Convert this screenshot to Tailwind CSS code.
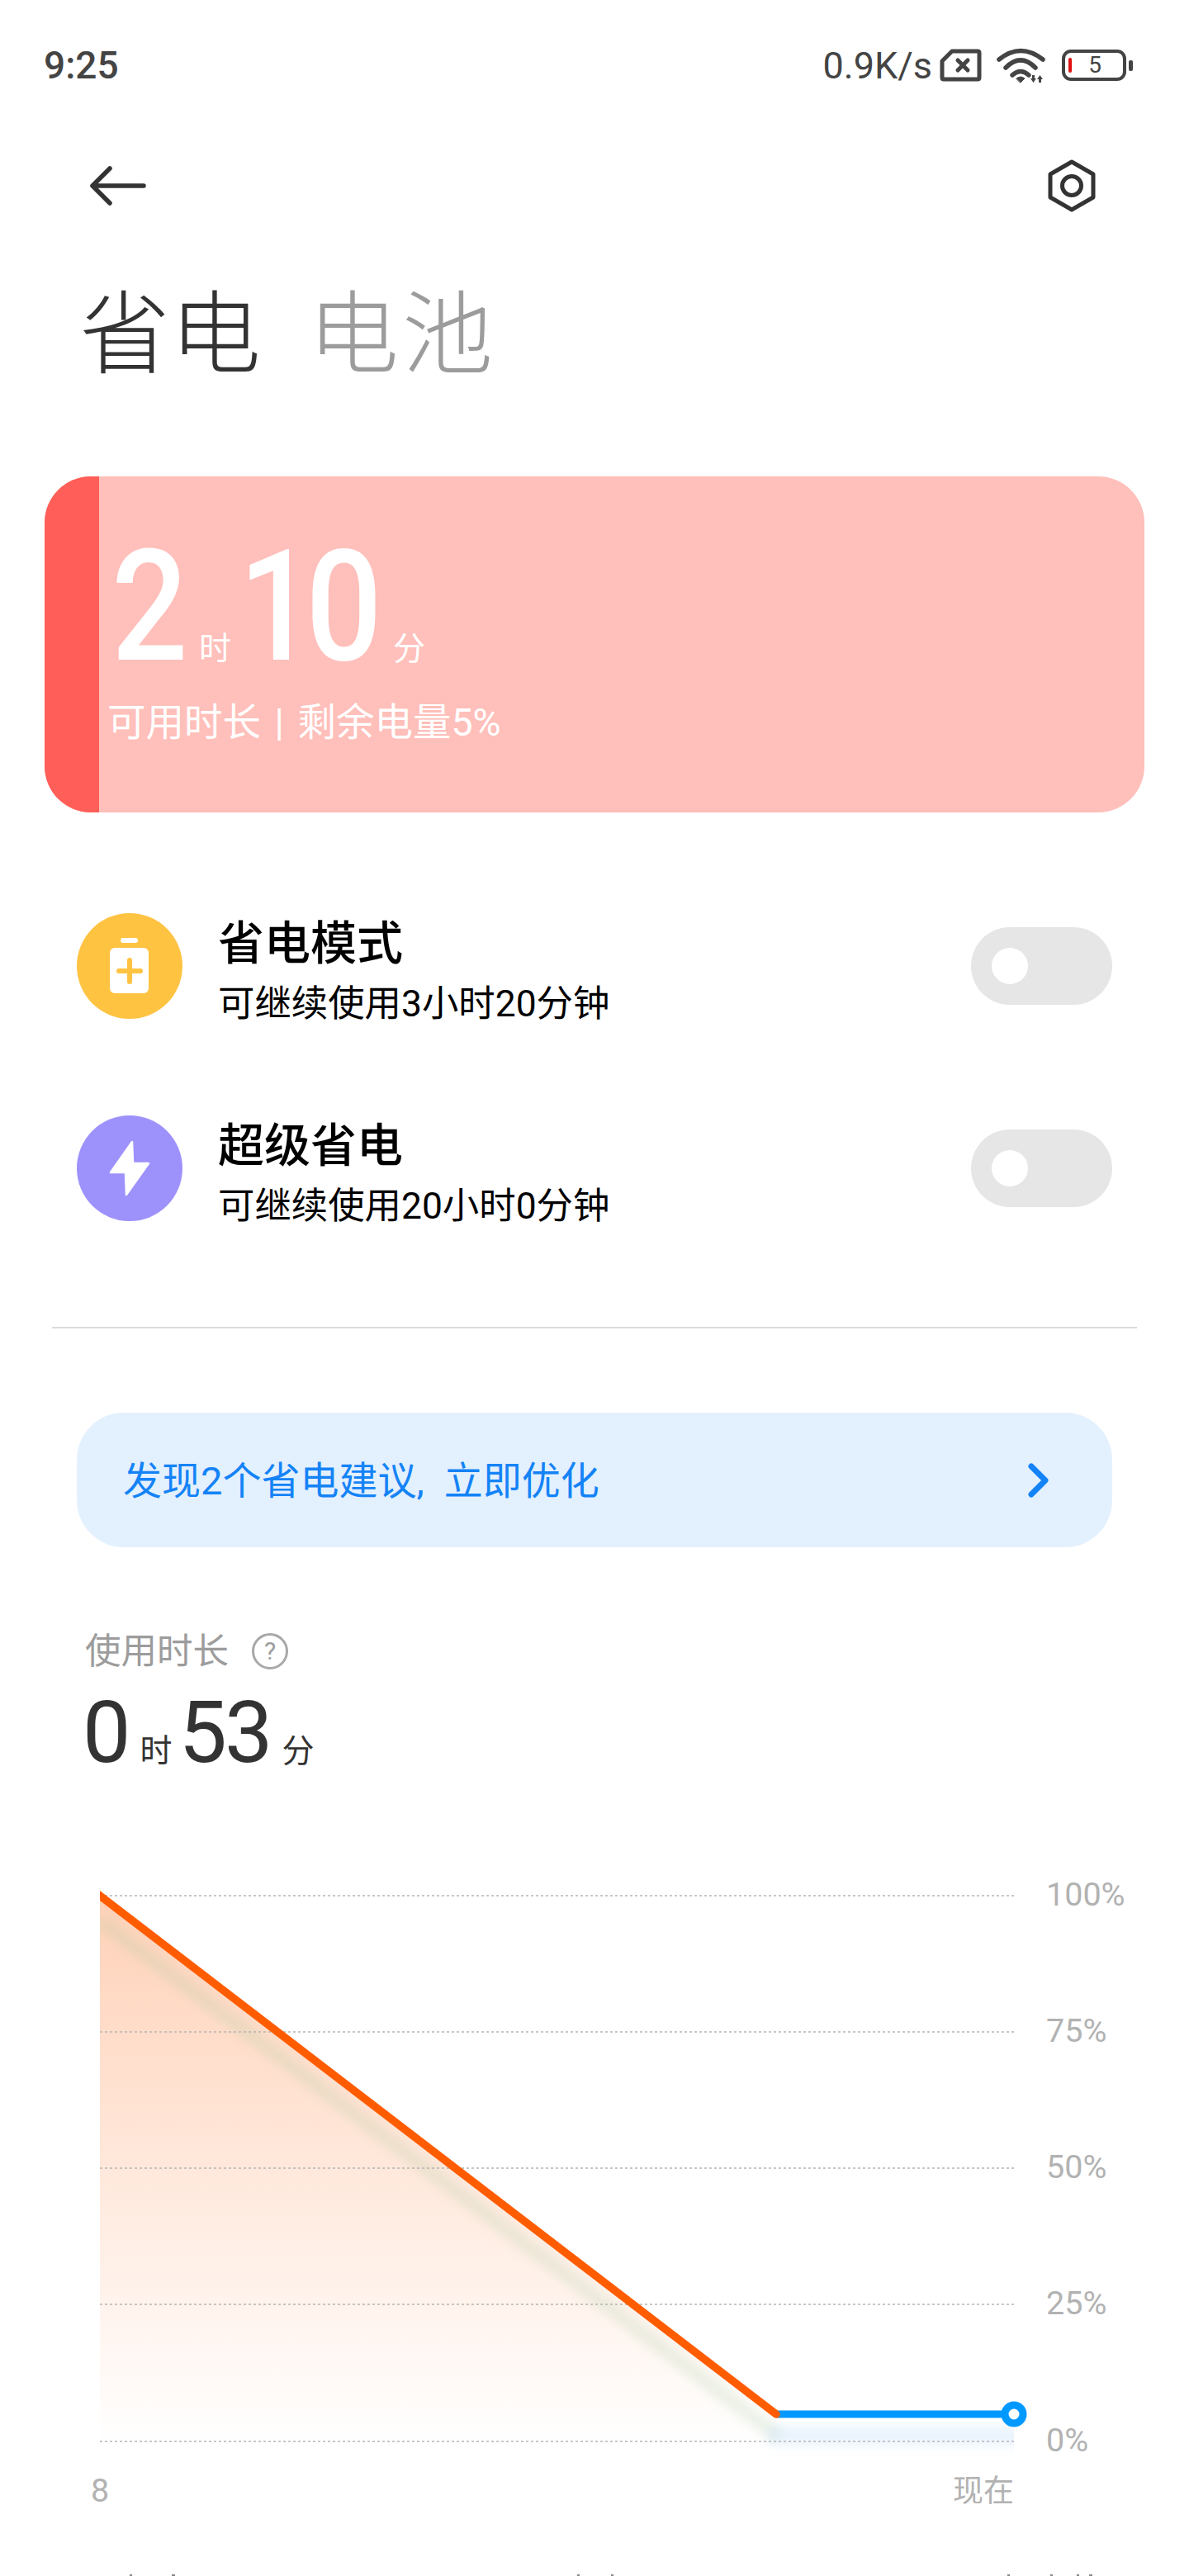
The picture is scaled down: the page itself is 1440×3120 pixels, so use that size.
<!DOCTYPE html>
<html lang="zh-CN">
<head>
<meta charset="utf-8">
<title>省电</title>
<script src="https://cdn.jsdelivr.net/npm/@tailwindcss/browser@4"></script>
</head>
<body class="m-0 bg-white">
<div class="w-[1440px] h-[3120px] overflow-hidden bg-white font-['Roboto','Noto_Sans_CJK_SC',sans-serif]">

  <!-- status bar -->
  <div class="h-[158px] flex items-center pl-[53px] pr-[68px] text-[#444]">
    <span class="text-[46px] leading-none font-medium">9:25</span>
    <div class="ml-auto flex items-center">
      <span class="text-[45px] leading-none">0.9K/s</span>
      <svg class="ml-[9px]" width="51" height="40" viewBox="0 0 51 40" fill="none" stroke="#444" stroke-width="5" stroke-linejoin="round"><path d="M15 3H46Q48 3 48 5V35Q48 37 46 37H5Q3 37 3 35V15Z"/><path d="M22 14L34 26M34 14L22 26" stroke-linecap="round"/></svg>
      <svg class="ml-[18px]" width="59" height="43" viewBox="0 0 59 43" fill="none" stroke="#444" stroke-width="5.500" stroke-linecap="round"><path d="M3 14Q29 -7 56 14"/><path d="M11 24Q29 6 47 24"/><path d="M19 33Q29 24 39 33"/><path d="M24 37Q29 33 34 37L29 42Z" fill="#444" stroke-width="1"/><path d="M43 33h3v4h2l-3.500 5l-3.500-5h2zM51 42h3v-4h2l-3.500-5l-3.500 5h2z" fill="#444" stroke="none"/></svg>
      <div class="ml-[20px] relative w-[78px] h-[38px] border-[4px] border-[#444] rounded-[11px] flex items-center justify-center text-[28px] leading-none pl-[2px]">
        <div class="absolute left-[4px] top-[6px] w-[4px] h-[18px] rounded-[2px] bg-[#e01010]"></div>
        <span>5</span>
      </div>
      <div class="ml-[3px] w-[5px] h-[13px] rounded-[2px] bg-[#444]"></div>
    </div>
  </div>

  <!-- nav -->
  <div class="h-[134px] flex items-center justify-between pl-[109px] pr-[112px]">
    <svg width="68" height="48" viewBox="0 0 68 48" fill="none" stroke="#333" stroke-width="5.500" stroke-linecap="round" stroke-linejoin="round"><path d="M24 3L3 24L24 45M3 24H65"/></svg>
    <svg width="60" height="64" viewBox="0 0 60 64" fill="none" stroke="#333" stroke-width="5" stroke-linejoin="round"><path d="M30 3L56 18V46L30 61L4 46V18Z"/><circle cx="30" cy="32" r="11.500"/></svg>
  </div>

  <!-- title -->
  <div class="h-[226px] flex items-center pt-[4px] pl-[96px] gap-[57px] text-[110px] leading-none font-light">
    <span class="text-[#333]">省电</span>
    <span class="text-[#9c9c9c] tracking-[4px]">电池</span>
  </div>

  <!-- remaining card -->
  <div class="mt-[59px] mx-[54px] h-[407px] rounded-[56px] overflow-hidden bg-[#ffbfba] flex">
    <div class="w-[66px] h-full bg-[#ff5f58]"></div>
    <div class="pt-[92px] pl-[12px] text-white">
      <div class="h-[133px] flex items-baseline text-[187px] leading-[133px] font-medium">
        <span class="ml-[3px] w-[106px] origin-left scale-x-[0.87]">2</span>
        <span class="w-[39px] text-[39px] leading-none font-normal">时</span>
        <span class="ml-[9px] w-[187px] origin-left scale-x-[0.87] tracking-[-13px]">10</span>
        <span class="text-[39px] leading-none font-normal">分</span>
      </div>
      <div class="mt-[43px] -ml-[2px] h-[60px] text-[46.500px] leading-[60px] whitespace-nowrap [word-spacing:5px]">可用时长 | 剩余电量5%</div>
    </div>
  </div>

  <!-- modes -->
  <div class="mt-[122px] px-[93px] flex flex-col gap-[117px]">
    <div class="h-[128px] flex items-center">
      <div class="w-[128px] h-[128px] rounded-full bg-[#ffc342] flex items-center justify-center">
        <svg width="128" height="128" viewBox="0 0 128 128"><rect x="53" y="30" width="21" height="6" rx="3" fill="#fff"/><rect x="40" y="42" width="47" height="55" rx="6" fill="#fff"/><path d="M64 57V83M51 70H77" stroke="#ffc342" stroke-width="6" stroke-linecap="round"/></svg>
      </div>
      <div class="ml-[43px] self-start mt-[7px] text-black whitespace-nowrap">
        <div class="text-[56px] leading-[60px] font-medium">省电模式</div>
        <div class="mt-[13px] text-[44.400px] leading-[60px]">可继续使用3小时20分钟</div>
      </div>
      <div class="ml-auto w-[171px] h-[94px] rounded-full bg-[#e6e6e6] flex items-center pl-[25px]"><div class="w-[44px] h-[44px] rounded-full bg-white"></div></div>
    </div>
    <div class="h-[128px] flex items-center">
      <div class="w-[128px] h-[128px] rounded-full bg-[#9d92fc] flex items-center justify-center">
        <svg width="128" height="128" viewBox="0 0 128 128"><path d="M67 32L41 69H59L60 96L87 58H68Z" fill="#fff" stroke="#fff" stroke-width="2.500" stroke-linejoin="round"/></svg>
      </div>
      <div class="ml-[43px] self-start mt-[7px] text-black whitespace-nowrap">
        <div class="text-[56px] leading-[60px] font-medium">超级省电</div>
        <div class="mt-[13px] text-[44.400px] leading-[60px]">可继续使用20小时0分钟</div>
      </div>
      <div class="ml-auto w-[171px] h-[94px] rounded-full bg-[#e6e6e6] flex items-center pl-[25px]"><div class="w-[44px] h-[44px] rounded-full bg-white"></div></div>
    </div>
  </div>

  <div class="mt-[128px] mx-[63px] h-[1.500px] bg-[#dcdcdc]"></div>

  <!-- tip banner -->
  <div class="mt-[102.500px] mx-[93px] h-[163px] rounded-[57px] bg-[#e3f0fe] flex items-center pl-[56px] pr-[76px]">
    <span class="mt-[2px] text-[47px] leading-none text-[#1483f7]">发现2个省电建议<span class="mr-[24px]">,</span>立即优化</span>
    <svg class="ml-auto" width="26" height="42" viewBox="0 0 26 42" fill="none" stroke="#1483f7" stroke-width="7" stroke-linecap="round" stroke-linejoin="round"><path d="M4 4L21 21L4 38"/></svg>
  </div>

  <!-- usage -->
  <div class="mt-[101px] pl-[103px] h-[50px] flex items-center text-[#9c9c9c]">
    <span class="mt-[2px] text-[43.500px] leading-none">使用时长</span>
    <div class="ml-[28px] w-[44px] h-[44px] rounded-full border-[3px] border-[#a8a8a8] flex items-center justify-center text-[30px] leading-none">?</div>
  </div>
  <div class="mt-[37px] pl-[100px] h-[74px] flex items-baseline text-[#333] text-[104px] leading-[74px]">
    <span>0</span>
    <span class="ml-[11px] text-[39px] leading-none">时</span>
    <span class="ml-[8px] tracking-[-3px]">53</span>
    <span class="ml-[14px] text-[39px] leading-none">分</span>
  </div>

  <!-- chart -->
  <div class="relative mt-[134px] w-[1440px] h-[850px] text-[39.500px] leading-[40px] text-[#b2b2b2]">
    <svg class="absolute left-0 top-0" width="1440" height="850" viewBox="0 2270 1440 850" fill="none">
      <defs>
        <linearGradient id="fillGrad" gradientUnits="userSpaceOnUse" x1="0" y1="2296" x2="0" y2="2960">
          <stop offset="0" stop-color="#ff5c00" stop-opacity="0.28"/>
          <stop offset="1" stop-color="#ff5c00" stop-opacity="0"/>
        </linearGradient>
        <filter id="soft" filterUnits="userSpaceOnUse" x="0" y="2270" width="1440" height="850"><feGaussianBlur stdDeviation="6"/></filter>
        <clipPath id="plot"><rect x="121" y="2280" width="1107" height="720"/></clipPath>
      </defs>
      <path d="M121 2296L940 2924V2960H121Z" fill="url(#fillGrad)"/>
      <g clip-path="url(#plot)">
        <path d="M121 2326L944 2952" stroke="#9fc89a" stroke-opacity="0.2" stroke-width="18" filter="url(#soft)"/>
        <path d="M930 2950H1260" stroke="#bcdcf8" stroke-opacity="0.3" stroke-width="24" filter="url(#soft)"/>
      </g>
      <path d="M121 2296H1228M121 2461H1228M121 2626H1228M121 2791H1228M121 2957H1228" stroke="#b5b5b5" stroke-width="1.500" stroke-dasharray="3 3"/>
      <path d="M940 2924H1228" stroke="#0099ff" stroke-width="9"/>
      <g clip-path="url(#plot)"><path d="M110 2287.500L940 2924" stroke="#ff5c00" stroke-width="9.500" stroke-linecap="round"/></g>
      <circle cx="1228" cy="2924" r="11" fill="#fff" stroke="#0099ff" stroke-width="9"/>
      <path d="M157 3118h3v2h-3zM208 3118h4v2h-4zM699 3118h3v2h-3zM740 3118h3v2h-3zM1220 3118h3v2h-3zM1272 3118h3v2h-3zM1304 3118h3v2h-3zM1319 3118h4v2h-4z" fill="#888"/>
    </svg>
    <span class="absolute left-[1267px] top-[5px]">100%</span>
    <span class="absolute left-[1267px] top-[170px]">75%</span>
    <span class="absolute left-[1267px] top-[335px]">50%</span>
    <span class="absolute left-[1267px] top-[500px]">25%</span>
    <span class="absolute left-[1267px] top-[666px]">0%</span>
    <span class="absolute left-[110px] top-[727px]">8</span>
    <span class="absolute left-[1154px] top-[728px] text-[37px]">现在</span>
  </div>
</div>
</body>
</html>
